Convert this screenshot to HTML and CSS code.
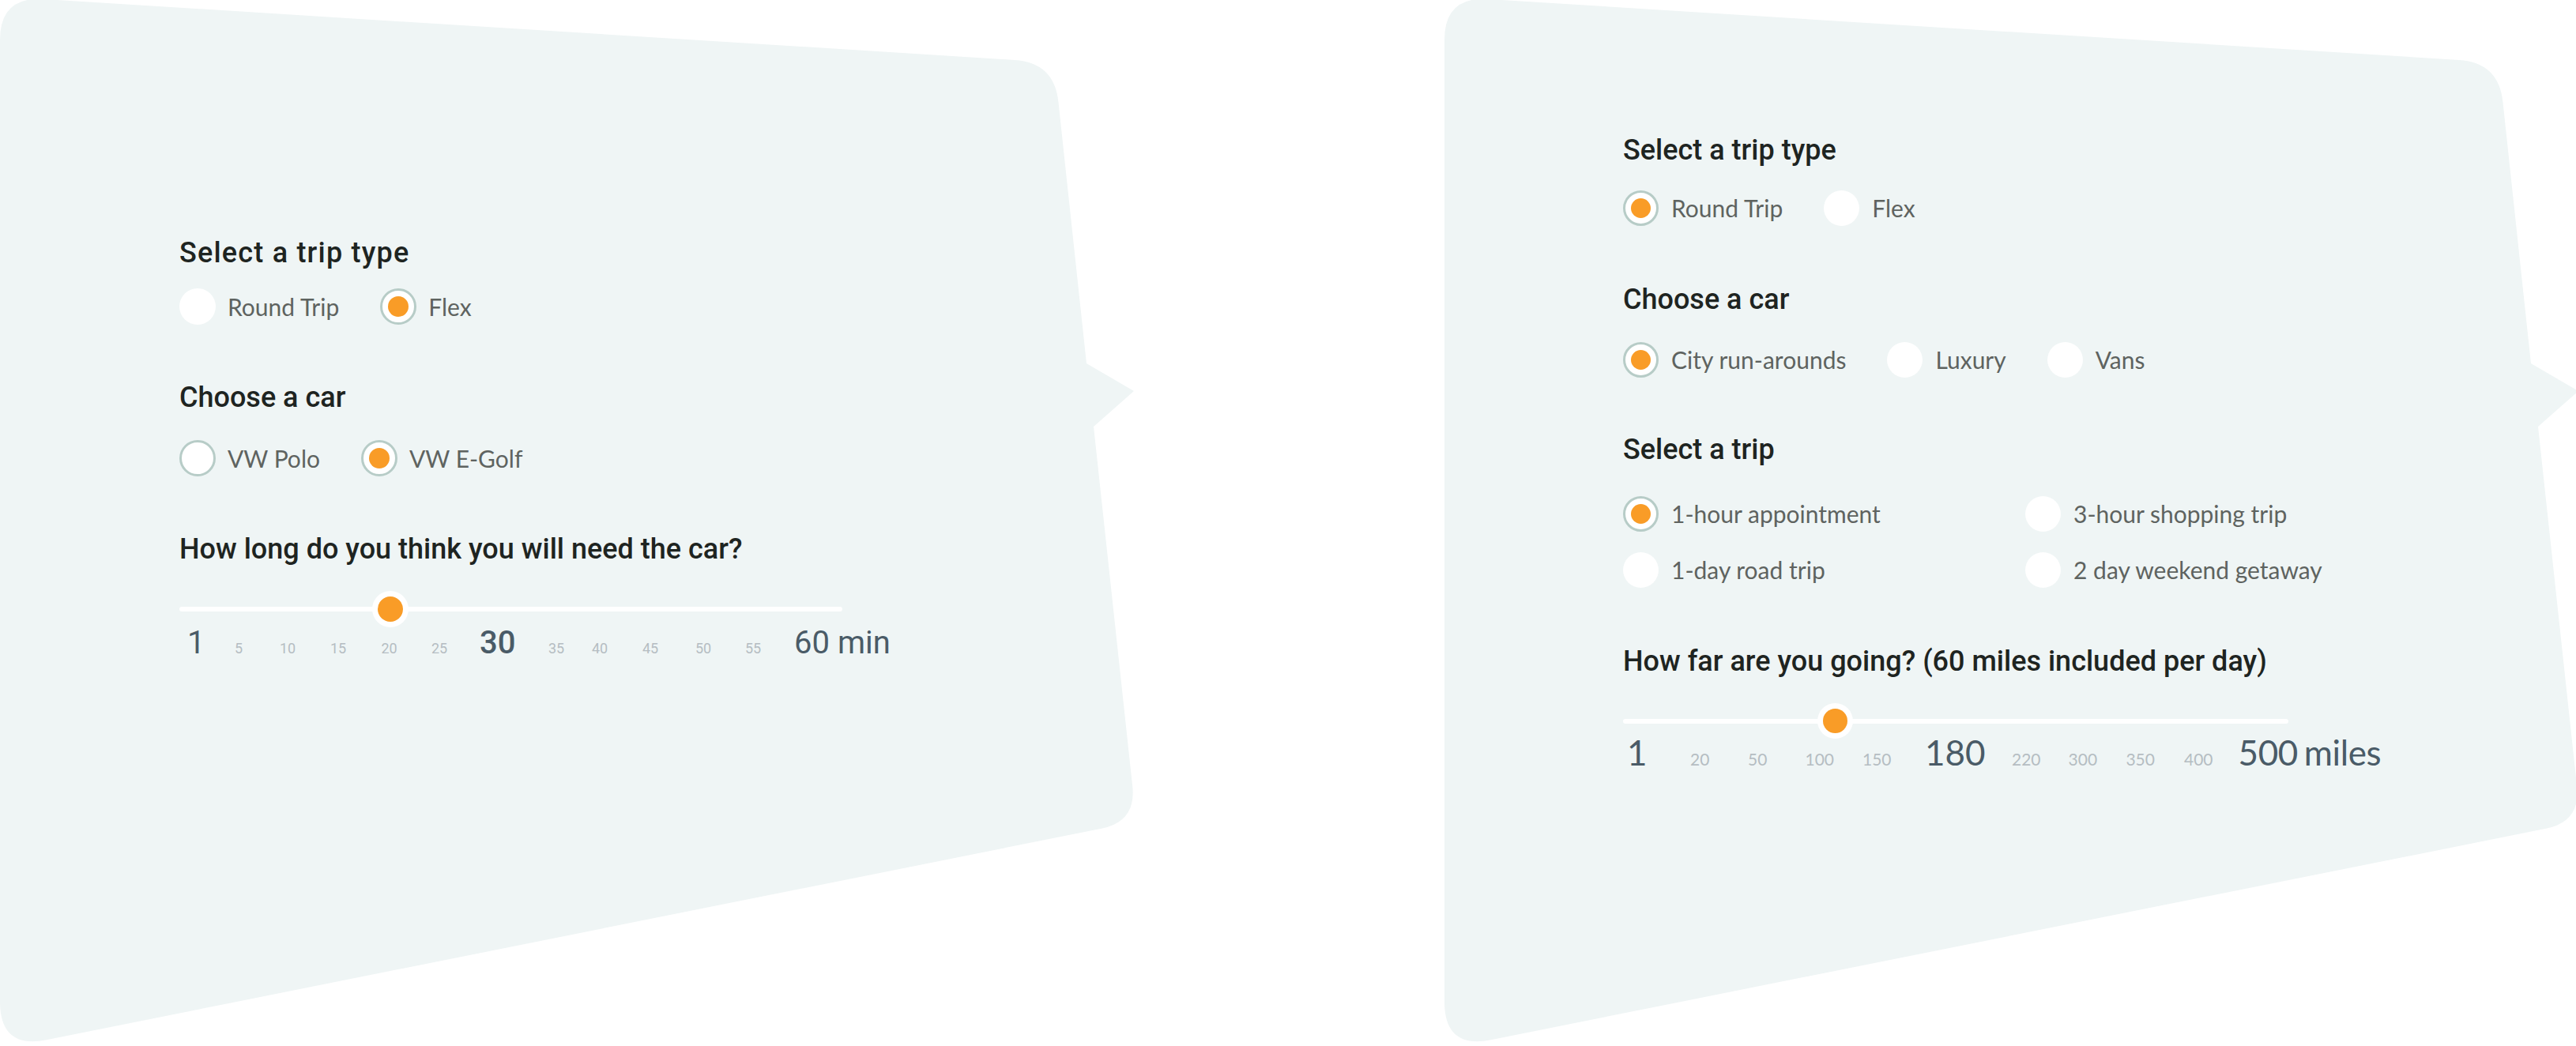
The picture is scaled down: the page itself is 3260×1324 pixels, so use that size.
FILE: index.html
```html
<!DOCTYPE html>
<html lang="en">
<head>
<meta charset="utf-8">
<title>Trip options</title>
<link rel="stylesheet" href="styles.css">
</head>
<body>
<main class="stage">
  <section class="panel panel--a">
    <svg class="bubble" width="1440" height="1324" viewBox="0 0 1440 1324" aria-hidden="true"><path d="M0,50.5 Q0,-4.5 54.9,-1.1 L1284.1,75.9 Q1334,79 1339.4,128.7 L1375,460 L1435,495 L1384,540 L1433.2,995.3 Q1438,1040 1393.9,1048.8 L58.8,1316.2 Q0,1328 0,1268 Z"/></svg>
    <div class="content">
      <h2 class="heading heading--wide">Select a trip type</h2>
      <div class="options options--first">
        <label class="option"><span class="radio"></span><span class="label">Round Trip</span></label>
        <label class="option"><span class="radio radio--ring radio--on"></span><span class="label">Flex</span></label>
      </div>
      <h2 class="heading heading--next">Choose a car</h2>
      <div class="options options--second">
        <label class="option"><span class="radio radio--ring"></span><span class="label">VW Polo</span></label>
        <label class="option"><span class="radio radio--ring radio--on"></span><span class="label">VW E-Golf</span></label>
      </div>
      <h2 class="heading heading--next">How long do you think you will need the car?</h2>
      <div class="slider">
        <div class="track"></div>
        <div class="thumb" style="--pos:31.8%"></div>
      </div>
      <div class="scale">
        <span class="mark">1</span>
        <span class="tick">5</span>
        <span class="tick">10</span>
        <span class="tick">15</span>
        <span class="tick">20</span>
        <span class="tick">25</span>
        <span class="mark mark--strong">30</span>
        <span class="tick">35</span>
        <span class="tick">40</span>
        <span class="tick">45</span>
        <span class="tick">50</span>
        <span class="tick">55</span>
        <span class="mark">60 min</span>
      </div>
    </div>
  </section>

  <section class="panel panel--b">
    <svg class="bubble" width="1440" height="1324" viewBox="0 0 1440 1324" aria-hidden="true"><path d="M0,50.5 Q0,-4.5 54.9,-1.1 L1284.1,75.9 Q1334,79 1339.4,128.7 L1375,460 L1435,495 L1384,540 L1433.2,995.3 Q1438,1040 1393.9,1048.8 L58.8,1316.2 Q0,1328 0,1268 Z"/></svg>
    <div class="content">
      <h2 class="heading">Select a trip type</h2>
      <div class="options options--first">
        <label class="option"><span class="radio radio--ring radio--on"></span><span class="label">Round Trip</span></label>
        <label class="option"><span class="radio"></span><span class="label">Flex</span></label>
      </div>
      <h2 class="heading heading--next">Choose a car</h2>
      <div class="options options--second">
        <label class="option"><span class="radio radio--ring radio--on"></span><span class="label">City run-arounds</span></label>
        <label class="option"><span class="radio"></span><span class="label">Luxury</span></label>
        <label class="option"><span class="radio"></span><span class="label">Vans</span></label>
      </div>
      <h2 class="heading heading--trip">Select a trip</h2>
      <div class="trips">
        <label class="option"><span class="radio radio--ring radio--on"></span><span class="label">1-hour appointment</span></label>
        <label class="option"><span class="radio"></span><span class="label">3-hour shopping trip</span></label>
        <label class="option"><span class="radio"></span><span class="label">1-day road trip</span></label>
        <label class="option"><span class="radio"></span><span class="label">2 day weekend getaway</span></label>
      </div>
      <h2 class="heading heading--next">How far are you going? (60 miles included per day)</h2>
      <div class="slider">
        <div class="track"></div>
        <div class="thumb" style="--pos:31.9%"></div>
      </div>
      <div class="scale">
        <span class="mark">1</span>
        <span class="tick">20</span>
        <span class="tick">50</span>
        <span class="tick">100</span>
        <span class="tick">150</span>
        <span class="mark">180</span>
        <span class="tick">220</span>
        <span class="tick">300</span>
        <span class="tick">350</span>
        <span class="tick">400</span>
        <span class="mark mark--unit">500 miles</span>
      </div>
    </div>
  </section>
</main>
</body>
</html>
```

FILE: styles.css
```css
* { box-sizing: border-box; }

html, body {
  margin: 0;
  padding: 0;
  background: #ffffff;
}

body {
  width: 3260px;
  height: 1324px;
  overflow: hidden;
}

.stage {
  display: flex;
  gap: 388px;
  height: 1324px;
}

.panel {
  position: relative;
  flex: 0 0 1440px;
  height: 1324px;
}

.bubble {
  position: absolute;
  left: 0;
  top: 0;
  overflow: visible;
  z-index: 0;
}

.bubble path { fill: #eff5f5; }

.content {
  position: relative;
  z-index: 1;
  display: flex;
  flex-direction: column;
  align-items: flex-start;
  padding-left: 227px;
}

.panel--a .content { padding-top: 300px; }
.panel--b .content { padding-top: 170px; padding-left: 226px; }

.heading {
  margin: 0;
  height: 40px;
  line-height: 40px;
  font-family: Roboto, "Noto Sans", sans-serif;
  font-size: 36px;
  font-weight: 500;
  color: #1e2421;
  white-space: nowrap;
}

.heading--wide { letter-spacing: 1.2px; }

.panel--a .heading--next { margin-top: 72px; }
.panel--b .heading--next { margin-top: 73px; }
.panel--b .heading--trip { margin-top: 71px; }

.options {
  display: flex;
  gap: 52px;
}

.panel--a .options--first { margin-top: 25px; }
.panel--a .options--second { margin-top: 34px; }
.panel--b .options--first { margin-top: 30px; }
.panel--b .options--second { margin-top: 33px; }

.trips {
  display: grid;
  grid-template-columns: 509px auto;
  row-gap: 25px;
  margin-top: 38px;
}

.option {
  display: flex;
  align-items: center;
  gap: 15px;
}

.panel--b .option { gap: 16px; }

.radio {
  flex: none;
  width: 46px;
  height: 46px;
  border-radius: 50%;
  background: #ffffff;
  display: flex;
  align-items: center;
  justify-content: center;
}

.panel--b .radio { width: 45px; height: 45px; }

.radio--ring { border: 3.5px solid #b7ccc7; }

.radio--on::after {
  content: "";
  width: 26px;
  height: 26px;
  border-radius: 50%;
  background: #f99c27;
}

.panel--b .radio--on::after { width: 25px; height: 25px; }

.label {
  font-family: Lato, "Open Sans", sans-serif;
  font-size: 30px;
  line-height: 46px;
  color: #5e6360;
  white-space: nowrap;
}

.slider {
  position: relative;
  display: flex;
  align-items: center;
  height: 46px;
  margin-top: 33px;
}

.panel--a .slider { width: 839px; }
.panel--b .slider { width: 842px; height: 45px; margin-top: 33px; }

.track {
  flex: 1;
  height: 6px;
  border-radius: 3px;
  background: #ffffff;
}

.thumb {
  position: absolute;
  top: 0;
  left: calc(var(--pos) - 23px);
  width: 46px;
  height: 46px;
  border-radius: 50%;
  background: #ffffff;
  display: flex;
  align-items: center;
  justify-content: center;
}

.thumb::after {
  content: "";
  width: 32px;
  height: 32px;
  border-radius: 50%;
  background: #f99c27;
}

.panel--b .thumb { width: 45px; height: 45px; left: calc(var(--pos) - 22.5px); }
.panel--b .thumb::after { width: 31px; height: 31px; }

.scale {
  display: grid;
  align-items: baseline;
  justify-items: start;
  white-space: nowrap;
}

.panel--a .scale {
  margin-left: 10px;
  grid-template-columns: 60px 57px 64px 64.5px 63.5px 61px 87px 55px 64px 67px 63px 62px auto;
  font-family: Roboto, "Noto Sans", sans-serif;
}

.panel--b .scale {
  margin-left: 5px;
  grid-template-columns: 80px 73px 72.5px 72.5px 79px 110px 71.6px 72.8px 73.6px 68.6px auto;
  font-family: Lato, "Open Sans", sans-serif;
}

.tick { color: #b5bdc2; }
.mark { color: #4a5b67; }

.panel--a .tick { font-size: 18px; line-height: 20px; }
.panel--a .mark { font-size: 40px; line-height: 40px; }
.panel--a .mark--strong { font-weight: 500; }

.panel--b .tick { font-size: 21px; line-height: 21px; }
.panel--b .mark { font-size: 44px; line-height: 34px; }
.panel--b .mark--unit { word-spacing: -3px; letter-spacing: -0.4px; }
```
